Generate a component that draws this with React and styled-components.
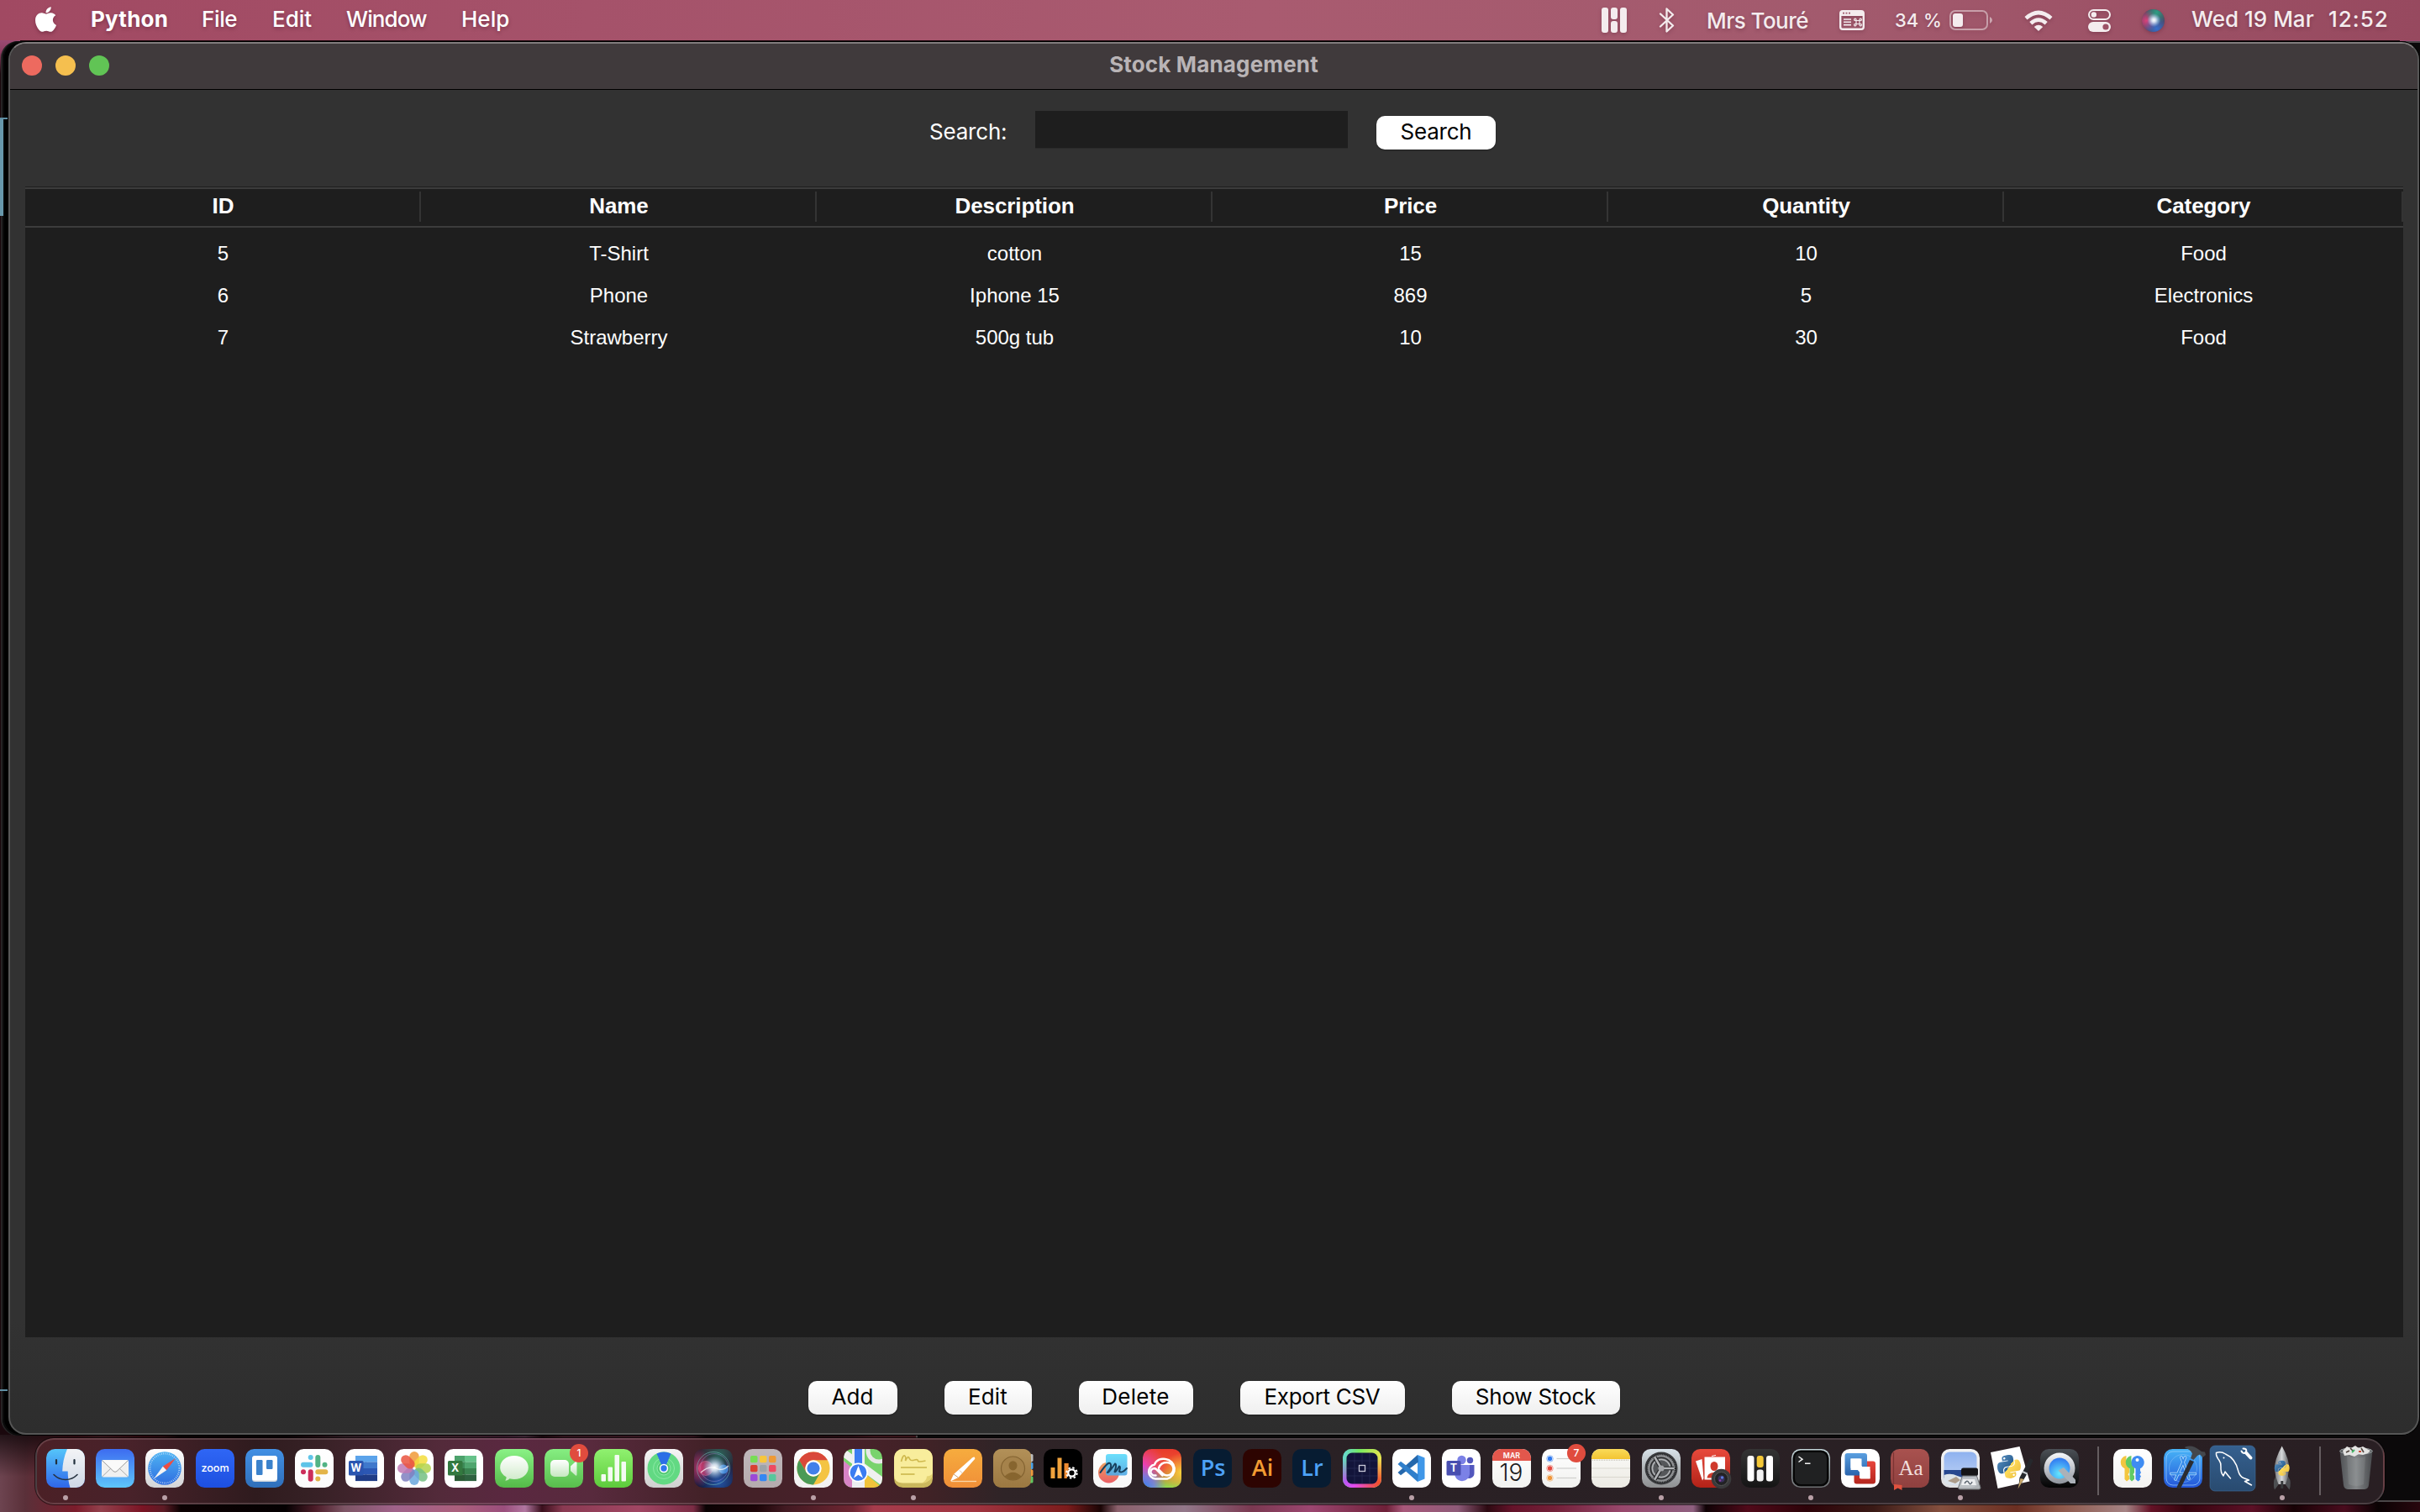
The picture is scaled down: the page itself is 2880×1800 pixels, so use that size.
import React from "react";
import styled, { createGlobalStyle } from "styled-components";
import { FaApple, FaPython } from "react-icons/fa";

const UI = `Inter, "Liberation Sans", sans-serif`;
const ARIAL = `"Liberation Sans", Arial, sans-serif`;

const GlobalStyle = createGlobalStyle`
  * { box-sizing: border-box; }
  body { margin: 0; background: #000; overflow: hidden; }
`;

/* ---------- desktop ---------- */

const Desktop = styled.div`
  position: relative;
  width: 2880px;
  height: 1800px;
  overflow: hidden;
  display: flex;
  flex-direction: column;
  font-family: ${UI};
  background: #1a080d;
`;

const Wallpaper = styled.div`
  position: absolute;
  left: 0;
  right: 0;
  bottom: 0;
  height: 92px;
  background:
    linear-gradient(180deg, rgba(10, 4, 6, 0.75) 0, rgba(10, 4, 6, 0) 50px),
    linear-gradient(90deg,
      #6d4450 0, #5a3039 30px, #7b1c2b 90px, #93404c 120px, #7a1424 170px, #5c1b25 195px, #0c0203 215px,
      #050102 340px, #4c1c28 375px, #7d5565 410px, #a0628a 470px, #ab5f7c 545px, #9a4e7c 600px, #b176a0 625px,
      #3a0f1c 645px, #8a3a52 670px, #a14663 760px, #7b2c45 825px, #0b0304 840px, #1c0508 900px, #421a22 935px,
      #6e2632 1015px, #a63c4c 1040px, #a03440 1160px, #7c1c1c 1270px, #1a0505 1310px, #8b606c 1330px,
      #93788a 1410px, #7a3850 1490px, #9c4670 1560px, #6e2038 1650px, #a8587a 1670px, #8e5a78 1735px,
      #2d0a12 1770px, #65132a 1800px, #722038 1850px, #98486c 1930px, #8f6080 2015px, #0f0205 2030px,
      #510a1a 2080px, #2d0309 2150px, #3a1a16 2230px, #85503f 2310px, #6b2f22 2400px, #8d5648 2450px,
      #a58384 2530px, #641226 2560px, #36050f 2600px, #5c1026 2680px, #170205 2730px, #4a0c1e 2790px,
      #0a0203 2830px, #28060e 2880px);
`;

const CornerTint = styled.div`
  position: absolute;
  top: 48px;
  ${(p) => (p.$right ? "right: 0;" : "left: 0;")}
  width: 24px;
  height: 40px;
  background: linear-gradient(180deg, #9a4a72 0, #8c3d60 14px, #1a080d 40px);
`;

const BackWindow = styled.div`
  position: absolute;
  left: ${(p) => p.$left}px;
  right: ${(p) => p.$right}px;
  top: 49px;
  bottom: ${(p) => p.$bottom}px;
  background: ${(p) => p.$bg || "#000"};
  border: 2px solid ${(p) => p.$line};
  border-radius: 20px;
`;

const TealEdge = styled.div`
  position: absolute;
  left: 0;
  top: 140px;
  width: 9px;
  height: 1516px;
  border-top: 2px solid #5f8ea3;
  border-bottom: 2px solid #5f8ea3;
  &::before {
    content: "";
    display: block;
    width: 4px;
    height: 115px;
    background: #6797ab;
  }
`;

/* ---------- menu bar ---------- */

const MenuBar = styled.header`
  position: relative;
  height: 48px;
  flex: none;
  display: flex;
  align-items: center;
  padding-left: 41px;
  color: #fff;
  background: linear-gradient(90deg, #a14962 0, #a5526a 700px, #a95b70 1500px, #a25a6d 2200px, #97495f 2880px);
`;

const AppleMark = styled(FaApple)`
  width: 27px;
  height: 34px;
  margin: 0 40px 3px 0;
  flex: none;
  filter: drop-shadow(0 2px 2px rgba(60, 10, 30, 0.35));
`;

const MenuItem = styled.span`
  width: ${(p) => p.$w}px;
  flex: none;
  font-size: 26px;
  font-weight: ${(p) => (p.$bold ? 700 : 500)};
  letter-spacing: ${(p) => p.$track || 0}px;
  line-height: 46px;
  height: 48px;
  white-space: nowrap;
  text-shadow: 0 2px 4px rgba(60, 10, 30, 0.35);
`;

const StatusArea = styled.div`
  width: 974px;
  height: 48px;
  margin-left: auto;
  display: flex;
  align-items: center;
  color: #f4ecee;
`;

const Status = styled.div`
  width: ${(p) => p.$w}px;
  margin-left: ${(p) => p.$gap || 0}px;
  flex: none;
  display: flex;
  svg { display: block; overflow: visible; filter: drop-shadow(0 2px 2px rgba(60, 10, 30, 0.25)); }
`;

const StatusText = styled(Status)`
  height: 48px;
  line-height: ${(p) => p.$lh || 46}px;
  font-size: ${(p) => p.$size || 26}px;
  font-weight: 500;
  letter-spacing: ${(p) => p.$track || 0}px;
  white-space: nowrap;
  text-shadow: 0 2px 4px rgba(60, 10, 30, 0.3);
`;

/* ---------- window ---------- */

const AppWindow = styled.main`
  position: relative;
  width: 2869px;
  height: 1658px;
  margin: 2px 0 0 10px;
  flex: none;
  display: flex;
  flex-direction: column;
  border: 2px solid #565656;
  border-top-color: #817c7d;
  border-radius: 21px;
  overflow: hidden;
  background: linear-gradient(180deg, #323232 0, #323232 1520px, #2d2d2d 100%);
  box-shadow: 0 0 0 1px #000;
`;

const TitleBar = styled.div`
  height: 55px;
  flex: none;
  display: flex;
  align-items: center;
  padding: 0 0 2px 14px;
  background: #403a3c;
  border-bottom: 1px solid #000;
`;

const Lights = styled.div`
  width: 400px;
  display: flex;
  gap: 16px;
`;

const Light = styled.span`
  width: 24px;
  height: 24px;
  border-radius: 50%;
  background: ${(p) => p.$color};
`;

const Title = styled.h1`
  flex: 1;
  margin: 0 414px 0 0;
  text-align: center;
  font-size: 26px;
  font-weight: 700;
  letter-spacing: 0.15px;
  line-height: 49px;
  height: 52px;
  color: #b9b4b6;
`;

const SearchRow = styled.form`
  height: 115px;
  flex: none;
  display: flex;
  align-items: flex-start;
  padding: 25px 0 0 1094px;
`;

const SearchLabel = styled.label`
  width: 126px;
  font-size: 26px;
  letter-spacing: -0.2px;
  line-height: 49px;
  color: #fff;
`;

const SearchInput = styled.input`
  width: 372px;
  height: 44px;
  margin: 0 34px 0 0;
  padding: 0 8px;
  border: 0;
  border-radius: 0;
  outline: 0;
  background: #1e1e1e;
  color: #fff;
  font: 26px ${UI};
  box-shadow: 0 1px 0 #2a2a2a;
`;

const PushButton = styled.button`
  width: ${(p) => p.$w}px;
  height: 40px;
  flex: none;
  margin: ${(p) => p.$drop || 0}px 0 0;
  padding: 0 0 3px;
  border: 0;
  border-radius: 10px;
  background: ${(p) => (p.$flat ? "#fff" : "linear-gradient(180deg, #fff, #efefef)")};
  box-shadow: 0 1px 2px rgba(0, 0, 0, 0.35);
  color: #000;
  font: 400 26px/37px ${UI};
  letter-spacing: ${(p) => p.$track || 0}px;
  text-align: center;
  white-space: nowrap;
`;

const Table = styled.section`
  width: 2830px;
  height: 1370px;
  flex: none;
  margin-left: 18px;
  display: flex;
  flex-direction: column;
  background: #1e1e1e;
  border-top: 1px solid #1e1e1e;
`;

const COLS = "471px 471px 471px 471px 471px 475px";

const HeaderRow = styled.div`
  height: 48px;
  flex: none;
  display: grid;
  grid-template-columns: ${COLS};
  border-top: 2px solid #3c3c3c;
  border-bottom: 2px solid #3c3c3c;
`;

const HeaderCell = styled.div`
  height: 36px;
  margin-top: 3px;
  border-right: 2px solid #343434;
  padding-left: 2px;
  text-align: center;
  font: 700 26px/34px ${ARIAL};
  letter-spacing: -0.1px;
  color: #fff;
`;

const Rows = styled.div`
  padding-top: 6px;
`;

const Row = styled.div`
  height: 50px;
  display: grid;
  grid-template-columns: ${COLS};
`;

const Cell = styled.div`
  text-align: center;
  font: 24px/50px ${ARIAL};
  color: #fff;
`;

const Actions = styled.footer`
  margin-top: 52px;
  display: flex;
  justify-content: center;
  gap: 56px;
`;

/* ---------- dock ---------- */

const DockShelf = styled.nav`
  position: relative;
  width: 2796px;
  height: 79px;
  flex: none;
  margin: 4px 0 0 42px;
  padding-left: 4px;
  display: flex;
  align-items: stretch;
  border-radius: 22px;
  border: 2px solid rgba(255, 230, 235, 0.16);
  box-shadow: 0 0 0 1px rgba(0, 0, 0, 0.55);
  background: linear-gradient(90deg, #4b2026 0, #48222a 110px, #2f1b1e 260px, #352024 320px, #532a3a 480px, #5a2840 560px,
    #582a3d 660px, #422127 800px, #48212a 960px, #402226 1060px, #2f2427 1150px, #2a2125 1500px, #291f23 100%);
  background-color: #2a1c20;
`;

const Slot = styled.div`
  width: 59.35px;
  flex: none;
  display: flex;
  flex-direction: column;
  align-items: center;
  padding-top: 11px;
  svg.tile { width: 46px; height: 46px; display: block; overflow: visible; flex: none; }
  text { font-family: ${UI}; }
`;

const RunningDot = styled.i`
  width: 6px;
  height: 6px;
  margin-top: 9px;
  border-radius: 50%;
  background: #b9a0a7;
`;

const Divider = styled.i`
  width: 2px;
  height: 58px;
  margin: 8px ${(p) => p.$after}px 0 ${(p) => p.$before}px;
  flex: none;
  background: #655d60;
`;

/* ---------- icon helpers ---------- */

const Grad = ({ id, a, b, c, h }) => (
  <linearGradient id={id} x1="0" y1="0" x2={h ? 1 : 0} y2={h ? 0 : 1}>
    <stop offset="0" stopColor={a} />
    {c && <stop offset=".5" stopColor={c} />}
    <stop offset="1" stopColor={b} />
  </linearGradient>
);

const Tile = ({ id, a, b, c, children }) => (
  <svg className="tile" viewBox="0 0 46 46">
    <defs>
      <Grad id={id + "Bg"} a={a} b={b || a} c={c} />
      <clipPath id={id + "Clip"}><rect width="46" height="46" rx="10.5" /></clipPath>
    </defs>
    <rect width="46" height="46" rx="10.5" fill={`url(#${id}Bg)`} />
    {children}
  </svg>
);

const Badge = ({ n }) => (
  <g>
    <circle cx="41" cy="5" r="11" fill="#e04c3e" />
    <text x="41" y="9.2" fontSize="12" fontWeight="500" fill="#fff" textAnchor="middle">{n}</text>
  </g>
);

const PythonGlyph = ({ id, x, y, size }) => (
  <g>
    <defs>
      <linearGradient id={id} x1="0" y1="0" x2="1" y2="1">
        <stop offset="0" stopColor="#5b93c4" />
        <stop offset=".5" stopColor="#2f6496" />
        <stop offset=".5" stopColor="#ffdc5a" />
        <stop offset="1" stopColor="#e8b93a" />
      </linearGradient>
    </defs>
    <FaPython x={x} y={y} size={size} fill={`url(#${id})`} />
  </g>
);

/* ---------- dock icons ---------- */

const Finder = () => (
  <Tile id="finder" a="#55c5fa" b="#2f66ea">
    <defs><Grad id="finderFace" a="#f3f4f6" b="#cfd8e6" /></defs>
    <g clipPath="url(#finderClip)">
      <path d="M25 0C21 9 19.500 18 19.200 26.500h6.500C25.700 33 26.500 40 28.500 46H46V0z" fill="url(#finderFace)" />
    </g>
    <path d="M12 13v4.500M33.500 13v4.500" stroke="#22303d" strokeWidth="2.200" strokeLinecap="round" />
    <path d="M9 30.500C17 38.500 29 38.500 37 30.500" fill="none" stroke="#26323f" strokeWidth="1.600" strokeLinecap="round" />
  </Tile>
);

const Mail = () => (
  <Tile id="mail" a="#3d6cf0" b="#5ec6fb">
    <rect x="7" y="13" width="32" height="20.500" rx="2" fill="#f0f0f0" />
    <path d="M7.500 33 19 22M38.500 33 27 22" stroke="#aaa" strokeWidth="1" />
    <path d="M7.500 13.500 21 26.500q2 1.800 4 0L38.500 13.500" fill="#fafafa" stroke="#9b9b9b" strokeWidth="1" />
  </Tile>
);

const Safari = () => (
  <Tile id="safari" a="#ffffff" b="#d4d4d6">
    <defs><Grad id="safariDial" a="#4eb4f3" b="#2f6de0" /></defs>
    <circle cx="23" cy="23" r="19.800" fill="url(#safariDial)" />
    <circle cx="23" cy="23" r="17.500" fill="none" stroke="#cfe4fa" strokeWidth="2" strokeDasharray=".7 1.590" />
    <path d="M36 11 20.800 20.800l4.400 4.400z" fill="#ee4d42" />
    <path d="M10 35.500 20.800 20.800l4.400 4.400z" fill="#f5f5f5" />
  </Tile>
);

const Zoom = () => (
  <Tile id="zoom" a="#2f66f5" b="#1d4fe0">
    <text x="23" y="26.500" fontSize="12.600" fontWeight="500" fill="#fff" textAnchor="middle">zoom</text>
  </Tile>
);

const Trello = () => (
  <Tile id="trello" a="#4290e4" b="#2f6fba">
    <rect x="8" y="8" width="30" height="31" rx="3.500" fill="#cfd6de" />
    <rect x="8" y="8" width="30" height="29.500" rx="3.500" fill="#fff" />
    <rect x="13" y="13" width="7.500" height="18" rx="1.200" fill="#3b82cc" />
    <rect x="25" y="13" width="7.500" height="11" rx="1.200" fill="#3b82cc" />
  </Tile>
);

const Slack = () => (
  <Tile id="slack" a="#ffffff" b="#fbfbfb">
    <g strokeWidth="6" strokeLinecap="round" fill="none">
      <path d="M27.300 10v9" stroke="#52b385" />
      <path d="M35.500 18.800h.01" stroke="#52b385" />
      <path d="M10 18.800h8.500" stroke="#5fc4e8" />
      <path d="M18.700 10v.01" stroke="#5fc4e8" />
      <path d="M18.700 27.300v8.500" stroke="#cc2d5a" />
      <path d="M10 27.300h.01" stroke="#cc2d5a" />
      <path d="M27.300 27.300h9" stroke="#e3b448" />
      <path d="M27.300 35.500v.01" stroke="#e3b448" />
    </g>
  </Tile>
);

const OfficeDoc = ({ id, letter, colors, tag }) => (
  <Tile id={id} a="#ffffff">
    {colors.map((row, i) => (
      <g key={i}>
        <rect x="12" y={8 + i * 7.5} width="13" height="7.600" fill={row[0]} />
        <rect x="24" y={8 + i * 7.5} width="14" height="7.600" fill={row[1]} />
      </g>
    ))}
    <rect x="4" y="14" width="17.500" height="17.500" rx="1.500" fill={tag} />
    <text x="12.700" y="27.300" fontSize="12.500" fontWeight="700" fill="#fff" textAnchor="middle">{letter}</text>
  </Tile>
);

const Word = () => (
  <OfficeDoc id="word" letter="W" tag="#2a55b0"
    colors={[["#5ba3ea", "#5ba3ea"], ["#3f78cc", "#3f78cc"], ["#2b57b4", "#2b57b4"], ["#1f3c86", "#1f3c86"]]} />
);

const Excel = () => (
  <OfficeDoc id="excel" letter="X" tag="#33793f"
    colors={[["#4ca26c", "#66c28a"], ["#3d8a57", "#4fa56e"], ["#2f6b3d", "#3a8350"], ["#2b5a35", "#2e6240"]]} />
);

const Photos = () => (
  <Tile id="photos" a="#ffffff">
    {["#f09a37", "#f3dd3c", "#b3d34e", "#74bf83", "#6aa8de", "#7f7fc0", "#c079b4", "#ea5440"].map((c, i) => (
      <rect key={c} x="17.300" y="3" width="11.400" height="18.500" rx="5.700" fill={c} fillOpacity=".85"
        transform={`rotate(${i * 45} 23 23)`} />
    ))}
    <circle cx="23" cy="23" r="1.200" fill="#fff" />
  </Tile>
);

const Messages = () => (
  <Tile id="msg" a="#8af286" b="#54ba48">
    <defs><Grad id="msgB" a="#fff" b="#cfeac9" /></defs>
    <path d="M23 8c9.500 0 16.800 6 16.800 14S32.500 36 23 36c-2 0-3.800-.3-5.500-.8-1.300 1.400-3 2.200-5.300 2.400 1-1.300 1.500-2.700 1.300-4.300C9 30.800 6.200 26.700 6.200 22 6.200 14 13.500 8 23 8z" fill="url(#msgB)" />
  </Tile>
);

const FaceTime = () => (
  <Tile id="ft" a="#86ee82" b="#58bd4c">
    <defs><Grad id="ftB" a="#fff" b="#c6e8c1" /></defs>
    <rect x="7" y="13" width="22" height="20" rx="5" fill="url(#ftB)" />
    <path d="M31 20.500 37 15q1.500-.8 1.500.8v14.800q0 1.600-1.500.8l-6-5.400z" fill="url(#ftB)" />
    <Badge n="1" />
  </Tile>
);

const Numbers = () => (
  <Tile id="num" a="#90f170" b="#5dcb3b">
    {[[8.5, 30], [16.5, 21.5], [24.5, 7], [32.5, 15]].map(([x, y]) => (
      <rect key={x} x={x} y={y} width="5.500" height={38.5 - y} rx="1" fill="#f4fbf2" />
    ))}
  </Tile>
);

const FindMy = () => (
  <Tile id="fm" a="#f5f5f5" b="#cfcfcf">
    <circle cx="23" cy="23" r="19.500" fill="#62d983" />
    <circle cx="23" cy="23" r="12.500" fill="none" stroke="#8ceaa6" strokeWidth="1" />
    <circle cx="23" cy="23" r="8" fill="#57cb78" stroke="#8ceaa6" strokeWidth="1" />
    <path d="M14.500 5.500Q23 1.500 31.500 5.500L24.500 22h-3z" fill="#2b6fe6" />
    <circle cx="23" cy="23" r="5.200" fill="#fff" />
    <circle cx="23" cy="23" r="3.700" fill="#2e78ee" />
  </Tile>
);

const SiriOrb = ({ id }) => (
  <defs>
    <radialGradient id={id + "R"} cx=".2" cy=".5" r=".5"><stop offset="0" stopColor="#f2407e" /><stop offset="1" stopColor="#f2407e" stopOpacity="0" /></radialGradient>
    <radialGradient id={id + "B"} cx=".65" cy=".85" r=".55"><stop offset="0" stopColor="#2f7cf0" /><stop offset="1" stopColor="#2f7cf0" stopOpacity="0" /></radialGradient>
    <radialGradient id={id + "G"} cx=".65" cy=".15" r=".5"><stop offset="0" stopColor="#23b58b" /><stop offset="1" stopColor="#23b58b" stopOpacity="0" /></radialGradient>
    <radialGradient id={id + "W"} cx=".53" cy=".48" r=".3"><stop offset="0" stopColor="#fff" /><stop offset=".3" stopColor="#e8f4ff" stopOpacity=".85" /><stop offset="1" stopColor="#9fd8ff" stopOpacity="0" /></radialGradient>
  </defs>
);

const Siri = () => (
  <Tile id="siri" a="#352232" b="#10183a">
    <SiriOrb id="so" />
    <g clipPath="url(#siriClip)">
      <rect width="30" height="46" fill="url(#soR)" opacity=".7" />
      <rect width="46" height="46" fill="url(#soG)" opacity=".45" />
      <rect width="46" height="46" fill="url(#soB)" opacity=".6" />
    </g>
    <circle cx="23" cy="23" r="19.500" fill="none" stroke="#6fb8b8" strokeOpacity=".6" strokeWidth="1" />
    <circle cx="24" cy="22" r="16.500" fill="none" stroke="#a78fd8" strokeOpacity=".5" strokeWidth=".8" />
    <circle cx="14" cy="23" r="8.500" fill="#f0487f" fillOpacity=".45" stroke="#ff8fb0" strokeOpacity=".6" strokeWidth=".6" />
    <circle cx="35" cy="24" r="5.500" fill="#4fa4ff" fillOpacity=".7" />
    <rect width="46" height="46" fill="url(#soW)" />
    <path d="M8 28Q18 19 26 23T41 20" fill="none" stroke="#fff" strokeOpacity=".7" strokeWidth="1.200" />
  </Tile>
);

const Launchpad = () => (
  <Tile id="lp" a="#c0b8bb" b="#b5abae">
    {["#77dd55", "#f7c63d", "#ee9a36", "#d93f33", "#9da3a8", "#ee4a62", "#9b4ad8", "#3487f2", "#57c79c"].map((c, i) => (
      <rect key={c} x={8 + (i % 3) * 11} y={8 + Math.floor(i / 3) * 11} width="8.500" height="8.300" rx="1.800" fill={c} />
    ))}
  </Tile>
);

const Chrome = () => (
  <Tile id="chrome" a="#ffffff" b="#f0f0f0">
    <circle cx="23" cy="23" r="19.500" fill="#f4c443" />
    <path d="M6.100 13.300A19.500 19.500 0 0 1 39.900 13.300H23A9.700 9.700 0 0 0 14.600 27.800z" fill="#d9483a" />
    <path d="M6.100 13.300A19.500 19.500 0 0 0 23 42.500L31.400 27.800A9.700 9.700 0 0 1 14.600 27.800z" fill="#4a9a56" />
    <circle cx="23" cy="23" r="9.700" fill="#fff" />
    <circle cx="23" cy="23" r="7.600" fill="#4280ea" />
  </Tile>
);

const Maps = () => (
  <Tile id="maps" a="#79d36d">
    <g clipPath="url(#mapsClip)">
      <path d="M0 14 14 26v20H0z" fill="#d884c6" />
      <path d="M24 46V28l22 18z" fill="#f1c43b" />
      <path d="M-2 3 48 40" stroke="#f0f0f0" strokeWidth="9" />
      <circle cx="42" cy="2" r="13" fill="none" stroke="#e8e8e8" strokeWidth="5" />
      <path d="M17.500-2v50" stroke="#eceff1" strokeWidth="15" />
      <path d="M17.500-2v24" stroke="#3b7df2" strokeWidth="9" />
    </g>
    <circle cx="17.500" cy="28" r="11.500" fill="#fff" />
    <circle cx="17.500" cy="28" r="9.800" fill="#3b7df2" />
    <path d="m17.500 20 5.500 14.500-5.500-3.700-5.500 3.700z" fill="#fff" />
  </Tile>
);

const Stickies = () => (
  <Tile id="st" a="#d8c76c" b="#c9b75b">
    <path d="M0 10.500A10.500 10.500 0 0 1 10.500 0h25A10.500 10.500 0 0 1 46 10.500V29Q44 40 33 40.500H10Q0 40 0 31z" fill="#f8ed9c" />
    <path d="M46 29Q44 40 33 40.500q6-3 6-8 4 0 7-3.500z" fill="#e3d373" />
    <path d="M8.500 15q2-8 4-7t1 6q3-6 4-4t2 3 5 0 4 1 9 0" fill="none" stroke="#cfb94e" strokeWidth="1.700" />
    <path d="M8 22h31M8 30h16.500" stroke="#d4c25c" strokeWidth="2.200" />
  </Tile>
);

const Pages = () => (
  <Tile id="pg" a="#f6ac3e" b="#f08f38">
    <path d="M9 38.500h30" stroke="#fbd6a8" strokeWidth="1.300" />
    <path d="M8 38.500 12 30 34 10.500q3.500-2.500 3.300 1.200L17.500 34z" fill="#fff" />
    <path d="m12 30 5.500 4" stroke="#c99a68" strokeWidth="1" />
    <path d="M19 25.500 22.500 29" stroke="#d9c2a4" strokeWidth="1" />
  </Tile>
);

const Contacts = () => (
  <Tile id="ct" a="#b29058" b="#9b7841">
    <rect x="44" y="6" width="3.500" height="9" rx="1.500" fill="#bcbcbc" />
    <rect x="44" y="16" width="3.500" height="8" rx="1.500" fill="#4aa3e8" />
    <rect x="44" y="24.500" width="3.500" height="7.500" rx="1.500" fill="#f09a3c" />
    <rect x="44" y="32.500" width="3.500" height="8" rx="1.500" fill="#62c660" />
    <rect width="45" height="46" rx="9.500" fill="url(#ctBg)" />
    <circle cx="23.500" cy="23" r="14" fill="#a5824b" stroke="#836331" strokeWidth="1.200" />
    <ellipse cx="23.500" cy="19.800" rx="5" ry="5.600" fill="#87652f" />
    <path d="M13.500 32.500Q23.500 23 33.500 32.500 23.500 41 13.500 32.500z" fill="#87652f" />
  </Tile>
);

const Analytics = () => (
  <Tile id="an" a="#000000">
    <path d="M8.500 22h5v13h-5zM16.500 10.500h5v24.500h-5z" fill="#f0a23c" />
    <path d="M24.500 17h5.200v10l-2 8h-3.200z" fill="#ee8a30" />
    <circle cx="33.500" cy="28.500" r="6.200" fill="none" stroke="#fff" strokeWidth="2" strokeDasharray="2.430 2.440" />
    <circle cx="33.500" cy="28.500" r="4.200" fill="#000" stroke="#fff" strokeWidth="2.300" />
  </Tile>
);

const Freeform = () => (
  <Tile id="ff" a="#ffffff" b="#f7f7f7">
    <defs><Grad id="ffA" a="#f0a15f" b="#ea5f66" /><Grad id="ffB" a="#5fdcfb" b="#52a8e4" /></defs>
    <circle cx="18.500" cy="28" r="12.500" fill="url(#ffA)" />
    <rect x="15" y="6" width="25.500" height="25.500" rx="3" fill="url(#ffB)" fillOpacity=".92" />
    <path d="M8.500 28Q18 14 20.500 17.500T17 28q1 1 9-10.500 2.500.5-.5 9.500 1 1.500 5.500-6.500 2 0 0 6 3 3 9-3.500" fill="none" stroke="#17415f" strokeWidth="2" strokeLinecap="round" />
  </Tile>
);

const CreativeCloud = () => (
  <Tile id="cc" a="#e8392c" b="#8fdc4e" c="#ef5a32">
    <defs>
      <radialGradient id="ccL" cx="0" cy=".45" r=".6"><stop offset="0" stopColor="#e93ec8" /><stop offset="1" stopColor="#e93e9c" stopOpacity="0" /></radialGradient>
      <radialGradient id="ccB" cx="0" cy="1" r=".6"><stop offset="0" stopColor="#2f7df6" /><stop offset=".5" stopColor="#6a7bf0" stopOpacity=".8" /><stop offset="1" stopColor="#6a7bf0" stopOpacity="0" /></radialGradient>
      <radialGradient id="ccY" cx="1" cy=".6" r=".5"><stop offset="0" stopColor="#f6d43a" /><stop offset="1" stopColor="#f6b43a" stopOpacity="0" /></radialGradient>
    </defs>
    <rect width="46" height="46" rx="10.500" fill="url(#ccY)" />
    <rect width="46" height="46" rx="10.500" fill="url(#ccL)" />
    <rect width="46" height="46" rx="10.500" fill="url(#ccB)" />
    <g fill="none" stroke="#fff" strokeWidth="2.500" strokeLinecap="round">
      <path d="M15 35.500A8.600 8.600 0 0 1 14 18.500 C16 13 22 10.800 27 12 A12 12 0 0 1 29 35.500z" />
      <path d="M23.500 31.500 16 24a4 4 0 0 0-5 6.300Q12.500 32 15.500 31.500" />
      <path d="M19 22.500q2.500-6.500 9.500-6.500A7.700 7.700 0 0 1 29 31.500q-3.200 0-5.200-2L19 24.500" />
    </g>
  </Tile>
);

const AdobeText = styled.text`
  && { font-family: "Open Sans", "Noto Sans", sans-serif; }
`;

const SerifText = styled.text`
  && { font-family: "Liberation Serif", serif; }
`;

const Adobe = ({ id, bg, fg, children }) => (
  <Tile id={id} a={bg}>
    <AdobeText x="23.500" y="32.300" fontSize="27" fontWeight="600" fill={fg} textAnchor="middle">{children}</AdobeText>
  </Tile>
);

const PixelPad = () => (
  <Tile id="pp" a="#6be06a" b="#b24df0">
    <defs>
      <linearGradient id="ppG" x1="0" y1="0" x2="1" y2=".3"><stop offset="0" stopColor="#62d3e6" /><stop offset=".4" stopColor="#75ea62" /><stop offset="1" stopColor="#f2e24b" /></linearGradient>
      <linearGradient id="ppH" x1="0" y1=".3" x2="1" y2=".5"><stop offset="0" stopColor="#a05cf5" /><stop offset=".4" stopColor="#e14cf0" /><stop offset="1" stopColor="#f0502f" /></linearGradient>
      <linearGradient id="ppM" x1="0" y1="0" x2="0" y2="1"><stop offset=".25" stopColor="#000" /><stop offset=".85" stopColor="#fff" /></linearGradient>
      <mask id="ppK"><rect width="46" height="46" fill="url(#ppM)" /></mask>
    </defs>
    <rect width="46" height="46" rx="10.500" fill="url(#ppG)" />
    <rect width="46" height="46" rx="10.500" fill="url(#ppH)" mask="url(#ppK)" />
    <rect x="4.500" y="4.500" width="37" height="37" rx="6.500" fill="#12143a" />
    <path d="M14 5v36M32 5v36M5 14h36M5 32h36M23 5v36M5 23h36" stroke="#2a2c58" strokeWidth=".7" />
    <rect x="19.500" y="19.500" width="7" height="7" fill="#12143a" stroke="#c8c8d8" strokeWidth="1.300" />
  </Tile>
);

const VSCode = () => (
  <Tile id="vs" a="#ffffff">
    <path d="M30 7 38.500 10.500v25L30 39z" fill="#3f97e8" />
    <path d="M30 7 6.500 28l3.500 3.200L31 15.500z" fill="#2568ac" />
    <path d="M30 39 6.500 18l3.500-3.200L31 30.500z" fill="#2f7fcb" />
  </Tile>
);

const Teams = () => (
  <Tile id="tm" a="#ffffff">
    <circle cx="33.500" cy="13.500" r="3.700" fill="#5257bd" />
    <path d="M27 19h11.500v9.500a6 6 0 0 1-9 5.500z" fill="#5257bd" />
    <circle cx="23.500" cy="13" r="5.200" fill="#7b81e6" />
    <path d="M15 19h18v11a9 9 0 0 1-17.500 2z" fill="#7b81e6" />
    <rect x="5.500" y="14" width="17" height="17.500" rx="1.500" fill="#484eb0" />
    <text x="14" y="27.300" fontSize="12.500" fontWeight="700" fill="#fff" textAnchor="middle">T</text>
  </Tile>
);

const Calendar = () => (
  <Tile id="cal" a="#ffffff" b="#f2f2f0">
    <g clipPath="url(#calClip)"><rect width="46" height="14" fill="#e3574c" /></g>
    <text x="23" y="11" fontSize="8.800" fontWeight="600" fill="#fff" textAnchor="middle">MAR</text>
    <text x="22.500" y="38" fontSize="28" fontWeight="300" fill="#1c1c1c" textAnchor="middle">19</text>
  </Tile>
);

const Reminders = () => (
  <Tile id="rem" a="#ffffff" b="#f1f1ef">
    {[["#2f7af0", 11.5], ["#e6483d", 23], ["#f0963a", 34.5]].map(([c, y]) => (
      <g key={c}>
        <circle cx="9.500" cy={y} r="3.800" fill="none" stroke={c} strokeOpacity=".5" strokeWidth="1" />
        <circle cx="9.500" cy={y} r="2.700" fill={c} />
        <path d={`M17.500 ${y}h23.500`} stroke="#cfcfcd" strokeWidth="1.200" />
      </g>
    ))}
    <Badge n="7" />
  </Tile>
);

const Notes = () => (
  <Tile id="nt" a="#fbfbf9" b="#eceae3">
    <defs><Grad id="ntY" a="#fadb59" b="#f3c432" /></defs>
    <g clipPath="url(#ntClip)"><rect width="46" height="12" fill="url(#ntY)" /></g>
    <path d="M1 13.200h44" stroke="#b9b5a6" strokeWidth="1" strokeDasharray="1 1" />
    <path d="M0 23h46M0 33.500h46" stroke="#d9d7d0" strokeWidth="1" />
  </Tile>
);

const Settings = () => (
  <Tile id="set" a="#d9e3ea" b="#8f9092" c="#b1b6b9">
    <circle cx="23" cy="23" r="19.500" fill="#3b3c3f" />
    <circle cx="23" cy="23" r="16.800" fill="#8f9194" stroke="#1f2022" strokeWidth="2.200" strokeDasharray="1 1" />
    <circle cx="23" cy="23" r="12.700" fill="#727477" stroke="#2b2c2e" strokeWidth="1.600" />
    <circle cx="23" cy="23" r="10.500" fill="#55575a" stroke="#b1b3b6" strokeWidth="1.500" />
    <path d="M23 23H38M23 23 15.500 10M23 23 15.500 36" stroke="#232426" strokeWidth="4.600" />
    <path d="M23 23H38.500M23 23 15.200 9.700M23 23 15.200 36.300" stroke="#b1b3b6" strokeWidth="2.600" />
    <circle cx="23" cy="23" r="3.600" fill="#a3a5a8" />
  </Tile>
);

const PhotoBooth = () => (
  <Tile id="pb" a="#e84a3c" b="#b32218">
    <path d="M5 14.500 12.500 12l2 23-1.500 2.500z" fill="#fff" />
    <path d="M15.500 9.500H40v27H15.500z" fill="#fff" />
    <ellipse cx="27" cy="20.500" rx="4.500" ry="5.500" fill="#cf3a2c" />
    <path d="M18.500 34.500q1-6.500 8.500-6.500t8.500 6.500z" fill="#cf3a2c" />
    <path d="M24 8.500l5-1" stroke="#fff" strokeWidth="1" />
    <circle cx="35.500" cy="35.500" r="11.800" fill="#3a3a3c" />
    <circle cx="35.500" cy="35.500" r="8" fill="#222224" stroke="#555" strokeWidth="1" />
    <circle cx="35.500" cy="35.500" r="4" fill="#39305e" />
    <circle cx="36.500" cy="34" r="1.700" fill="#5a7ad8" />
    <circle cx="34" cy="37.500" r="1.300" fill="#8d3ea2" />
  </Tile>
);

const Columns = () => (
  <Tile id="col" a="#343434" b="#151515">
    <rect x="7.500" y="8" width="8" height="30.500" rx="3" fill="#fff" />
    <rect x="30" y="8" width="8" height="30.500" rx="3" fill="#fff" />
    <rect x="18.700" y="8" width="8" height="14" rx="3" fill="#f4c837" />
    <rect x="18.700" y="24.500" width="8" height="14" rx="3" fill="#f2f2f2" />
  </Tile>
);

const Terminal = () => (
  <Tile id="term" a="#c4d6da" b="#6d6f72">
    <rect x="1.500" y="1.500" width="43" height="43" rx="9.500" fill="#060606" />
    <rect x="4" y="4" width="38" height="38" rx="7" fill="#202122" />
    <path d="m8.500 9 4.500 3.200L8.500 15.500M16 17.300h6.500" fill="none" stroke="#f2f2f2" strokeWidth="1.500" />
  </Tile>
);

const VMware = () => (
  <Tile id="vm" a="#ffffff">
    <defs><Grad id="vmA" a="#5a9fe0" b="#2a64ad" /><Grad id="vmR" a="#e8453c" b="#b5261e" /></defs>
    <path d="M15.500 31v7.500q0 3 3 3H38q3 0 3-3v-21q0-3-3-3h-8v6.500h4.500V35H22v-4z" fill="url(#vmR)" />
    <path d="M7.500 5H28q3 0 3 3v13h-6.500V11.500H11.500V25H22v6.500H7.500q-3 0-3-3V8q0-3 3-3z" fill="url(#vmA)" />
    <path d="M11.500 11.500h11.500l-3.200 3.500L31.500 28l3-3.500V35.500H23l3.200-3.200L15 19.500l-3.500 3.500z" fill="#fff" />
  </Tile>
);

const Dictionary = () => (
  <Tile id="dic" a="#a9524f" b="#8f403f">
    <path d="M4 42v7l4.500-2.500L13.500 49v-6z" fill="#e0523f" />
    <path d="M3.500 4v38" stroke="#7c3333" strokeWidth="1.200" />
    <SerifText x="24" y="30.500" fontSize="25" fill="#f1dedb" textAnchor="middle">Aa</SerifText>
  </Tile>
);

const Preview = () => (
  <Tile id="pv" a="#f4f4f4" b="#dedfe0">
    <defs><Grad id="pvSky" a="#8fb2ef" b="#c3d5f5" /></defs>
    <rect x="3.500" y="3.500" width="39" height="39" rx="7" fill="url(#pvSky)" />
    <path d="M3.500 25h39v9.500h-39z" fill="#27488f" />
    <path d="M3.500 31q8-3 16 1t23 0v6a5 5 0 0 1-6 4.500H10q-6.500-.5-6.500-6z" fill="#dce4ea" />
    <path d="M8 38l10-5 5 4-6 4z" fill="#ad9d8b" />
    <rect x="24" y="22.500" width="20" height="9.500" rx="2.500" fill="#141416" />
    <path d="M25.500 32h17l4.500 14q0 2-2 2H22.500q-2 0-2-2z" fill="#b9bec2" fillOpacity=".92" stroke="#6e7275" strokeWidth="1" />
    <path d="M26 36h14l2 7H24z" fill="#eceef0" />
    <path d="M28 41q3-5 5-1t4-1" stroke="#5c6670" fill="none" strokeWidth="1.500" />
  </Tile>
);

const Idle = () => (
  <svg className="tile" viewBox="0 0 46 46">
    <path d="M0 4 34.500-3l12 41.500L8.500 47z" fill="#fff" />
    <g transform="rotate(-10 22 21)"><PythonGlyph id="idlePy" x={6} y={5} size={32} /></g>
    <path d="M46.500 11.500q3.500-.5 4 2.500L42 32l-9 15 1.500-13z" fill="#26282c" />
    <path d="m35.500 35 4 1-7 11.500z" fill="#c9a86b" />
    <path d="m38 27 5.500 2.500" stroke="#c8ccd0" strokeWidth="2" />
  </svg>
);

const QuickTime = () => (
  <Tile id="qt" a="#4b5056" b="#030303">
    <defs>
      <Grad id="qtR" a="#f6f8fb" b="#8d939b" />
      <radialGradient id="qtC" cx=".5" cy=".75" r=".8"><stop offset="0" stopColor="#66e8fc" /><stop offset="1" stopColor="#2b6ef0" /></radialGradient>
    </defs>
    <circle cx="23" cy="23" r="18.500" fill="url(#qtR)" />
    <circle cx="23" cy="23" r="12.500" fill="url(#qtC)" />
    <path d="M21.500 25.500 28 22l14 14.500V41h-6z" fill="#abb1b8" />
  </Tile>
);

const Passwords = () => (
  <Tile id="pw" a="#ffffff" b="#f4f3f1">
    {[["#f3c63f", 0], ["#62cb63", 6]].map(([c, dx]) => (
      <path key={c} transform={`translate(${dx} 0)`} d="M15.500 8C11 9 8.800 12 8.800 16c0 3.500 2 6 4.700 7.200V36l2.500 2.500 3-2.500v-4l-1.500-1.500L19 28v-6Q14.500 16 15.500 8z" fill={c} />
    ))}
    <path d="M28.500 8a8 8 0 0 1 3.500 15.300V26l1 2-1.500 2.500 1.500 2L31.500 35l.5 1.500-2.500 2-3-2.500V23.300A8 8 0 0 1 28.500 8z" fill="#3f8cf2" />
    <circle cx="28.500" cy="13" r="2" fill="#fff" />
  </Tile>
);

const Xcode = () => (
  <Tile id="xc" a="#47b4f7" b="#2355d8">
    <rect x="3" y="3" width="40" height="40" rx="8" fill="none" stroke="#9fd0fb" strokeOpacity=".7" strokeWidth="1" />
    <circle cx="23" cy="23" r="16.500" fill="none" stroke="#9fd0fb" strokeOpacity=".5" strokeWidth=".8" />
    <g fill="none" stroke="#b9defd" strokeWidth="3.600" strokeLinecap="round"><path d="M21 10 30 35M25.500 10 14 36M9 29.500h28.500" /></g>
    <g fill="none" stroke="#348ae8" strokeWidth="2" strokeLinecap="round"><path d="M21 10 30 35M25.500 10 14 36M9 29.500h28.500" /></g>
    <path d="M31 13 36 15 20.500 46q-2 2.500-5-.5z" fill="#2b2d31" />
    <path d="M25.500-2.500Q34-6 43 1.500l2 1.500 4 .5 1 3.500-3.500 3-3.500-3.500-3 1.500-4.500 5-3.500-2 2-5.500Q31.500 0 25.500-1z" fill="#44474c" />
  </Tile>
);

const MySQL = () => (
  <svg className="tile" viewBox="0 0 46 46">
    <defs><Grad id="sqlBg" a="#35608f" b="#294b70" /></defs>
    <rect x="-4" y="-4" width="54" height="54" rx="6" fill="url(#sqlBg)" stroke="#3f6f9f" strokeWidth=".6" />
    <path d="M3.500 4.500q6-2 11 1.500 12 5 15.500 21 1.500 5.500 6 7.500l6.500 2.500-5 1.500 8 4.500M3.500 4.500q-.5 4 3.500 9 2.500 3.500 2 7.500-.5 7 3 11l2-5q2.500 3.500 6.500 8" fill="none" stroke="#fff" strokeWidth="1.500" strokeLinejoin="round" strokeLinecap="round" />
    <circle cx="12.500" cy="10.500" r="1" fill="#fff" />
    <path d="M39 4.500 44.500 10.500" stroke="#fff" strokeWidth="4" strokeLinecap="round" />
    <path d="M33.500 2.500q2 4 6 1.500M35.500-.5q5 0 3.500 4" fill="none" stroke="#fff" strokeWidth="2" strokeLinecap="round" />
  </svg>
);

const Rocket = () => (
  <svg className="tile" viewBox="0 0 46 46">
    <defs><Grad id="rkB" h a="#77797c" c="#d6d8da" b="#5a5c5f" /></defs>
    <path d="M17 31q-5 4-4 14l1 3.500 4.500-6M28 31q6 4 4.500 14l-1 3.500-4.500-6" fill="#4d4f52" />
    <path d="M22.700-3.500Q32 13 31 24q-.5 9-4 18h-8.500Q14.500 33 14 24q-.5-11 8.700-27.500z" fill="url(#rkB)" />
    <path d="M21.300 38h3v9h-3z" fill="#37393b" />
    <PythonGlyph id="rkPy" x={12.5} y={12.5} size={20.5} />
  </svg>
);

const Trash = () => (
  <svg className="tile" viewBox="0 0 46 46">
    <defs><Grad id="trB" h a="#54585b" c="#8d9193" b="#4b4e51" /></defs>
    <path d="M3.500 2 8 43q.5 4.500 5 5h20q4.500-.5 5-5L42.500 2z" fill="url(#trB)" fillOpacity=".9" />
    <path d="M12 8q10 5 22 1l-2 33q-8 4-18 0z" fill="#c0c4c6" fillOpacity=".14" />
    <ellipse cx="23" cy="2.500" rx="19.500" ry="4" fill="#5b5f61" stroke="#989c9e" strokeWidth="1" />
    <path d="M7 2 12-3l5 2 5-3 4 3 5-2 5 3 4 2-3 3-6 2-5-1-5 3-6-2-6 1z" fill="#e4e4e2" />
    <path d="m16-1 4 4M29-1l3 5M11 4l4-2" stroke="#4f443e" strokeWidth="1.600" />
    <path d="m18 4 3-3" stroke="#46b86a" strokeWidth="2" /><path d="m26 3 3 0" stroke="#c8503a" strokeWidth="2" />
  </svg>
);

const Ps = () => <Adobe id="ps" bg="#071c32" fg="#4da2f6">Ps</Adobe>;
const Ai = () => <Adobe id="ai" bg="#2d0401" fg="#f39b32">Ai</Adobe>;
const Lr = () => <Adobe id="lr" bg="#071c32" fg="#4da2f6">Lr</Adobe>;

const APPS = [
  [Finder, 1], [Mail], [Safari, 1], [Zoom], [Trello], [Slack], [Word], [Photos], [Excel], [Messages], [FaceTime],
  [Numbers], [FindMy], [Siri], [Launchpad], [Chrome, 1], [Maps], [Stickies, 1], [Pages], [Contacts], [Analytics],
  [Freeform], [CreativeCloud], [Ps], [Ai], [Lr], [PixelPad], [VSCode, 1], [Teams], [Calendar], [Reminders], [Notes],
  [Settings, 1], [PhotoBooth], [Columns], [Terminal, 1], [VMware], [Dictionary], [Preview, 1], [Idle], [QuickTime],
];
const RECENT = [[Passwords], [Xcode], [MySQL], [Rocket, 1]];

const DockItem = ({ app: [Icon, running] }) => (
  <Slot>
    <Icon />
    {running && <RunningDot />}
  </Slot>
);

/* ---------- status icons ---------- */

const StatusIcons = () => (
  <StatusArea>
    <Status $w={30}>
      <svg width="30" height="30" fill="#f4ecee">
        <rect width="8" height="30" rx="3" /><rect x="22" width="8" height="30" rx="3" />
        <rect x="11" width="8" height="14" rx="3" /><rect x="11" y="16" width="8" height="14" rx="3" />
      </svg>
    </Status>
    <Status $w={20} $gap={38}>
      <svg width="20" height="30" fill="none" stroke="#f4ecee" strokeWidth="2.300" strokeLinejoin="round" strokeLinecap="round">
        <path d="M2 7.500 17 21.500 9.500 28.500V1.500L17 8.500 2 22.500" />
      </svg>
    </Status>
    <StatusText $w={124} $gap={37} $track={-0.55} $lh={49}>Mrs Touré</StatusText>
    <Status $w={30} $gap={34}>
      <svg width="30" height="24">
        <rect x="1.200" y="1.200" width="27.600" height="21.600" rx="2.800" fill="none" stroke="#f4ecee" strokeWidth="2.400" />
        <path d="M1 2h28v5H1z" fill="#f4ecee" />
        <path d="M4 3.600h2M7.500 3.600h2M11 3.600h2" stroke="#a05a6c" strokeWidth="1.800" />
        <path d="M5 11h9M5 14.300h9M5 17.600h9" stroke="#f4ecee" strokeWidth="1.600" />
        <path d="M20 12.500h4v4h-4zM20 12.500h-1a1.200 1.200 0 1 1 1-1zM24 12.500v-1a1.200 1.200 0 1 1 1 1zM24 16.500h1a1.200 1.200 0 1 1-1 1zM20 16.500v1a1.200 1.200 0 1 1-1-1z" fill="none" stroke="#f4ecee" strokeWidth="1.200" />
      </svg>
    </Status>
    <StatusText $w={57} $gap={36} $size={22} $lh={48}>34 %</StatusText>
    <Status $w={52} $gap={8}>
      <svg width="52" height="24">
        <rect x="1" y="1" width="44" height="22" rx="6" fill="none" stroke="#f4ecee" strokeOpacity=".5" strokeWidth="2" />
        <rect x="4" y="4" width="12" height="16" rx="3" fill="#f4ecee" />
        <path d="M48 8q3 1.500 3 4t-3 4z" fill="#f4ecee" fillOpacity=".55" />
      </svg>
    </Status>
    <Status $w={34} $gap={37}>
      <svg width="34" height="25">
        <path d="M2 9.800Q17-3.800 32 9.800M7.800 15.800Q17 7.500 26.200 15.800" fill="none" stroke="#f4ecee" strokeWidth="4.600" />
        <path d="M17 25 11.800 20Q17 15.500 22.200 20z" fill="#f4ecee" />
      </svg>
    </Status>
    <Status $w={27} $gap={42}>
      <svg width="27" height="27">
        <rect x="1" y="1" width="25" height="11" rx="5.500" fill="none" stroke="#f4ecee" strokeWidth="2" />
        <circle cx="6.800" cy="6.500" r="3.200" fill="#f4ecee" />
        <rect y="15" width="27" height="12" rx="6" fill="#f4ecee" />
        <circle cx="21" cy="21" r="3.600" fill="#9c5266" />
      </svg>
    </Status>
    <Status $w={27} $gap={37}>
      <svg width="27" height="27">
        <SiriOrb id="ms" />
        <circle cx="13.500" cy="13.500" r="13.500" fill="#4d4660" />
        <circle cx="13.500" cy="13.500" r="13.500" fill="url(#msR)" opacity=".85" />
        <circle cx="13.500" cy="13.500" r="13.500" fill="url(#msG)" opacity=".8" />
        <circle cx="13.500" cy="13.500" r="13.500" fill="url(#msB)" opacity=".75" />
        <circle cx="13.500" cy="13.500" r="13.500" fill="url(#msW)" />
      </svg>
    </Status>
    <StatusText $w={148} $gap={32}>Wed 19 Mar</StatusText>
    <StatusText $w={90} $gap={15} $track={1}>12:52</StatusText>
  </StatusArea>
);

/* ---------- data ---------- */

const HEADERS = ["ID", "Name", "Description", "Price", "Quantity", "Category"];
const STOCK = [
  ["5", "T-Shirt", "cotton", "15", "10", "Food"],
  ["6", "Phone", "Iphone 15", "869", "5", "Electronics"],
  ["7", "Strawberry", "500g tub", "10", "30", "Food"],
];
const BUTTONS = [["Add", 106, 0], ["Edit", 104, 0.2], ["Delete", 136, 0.25], ["Export CSV", 196, -0.3], ["Show Stock", 200, -0.2]];

export default function App() {
  return (
    <Desktop>
      <GlobalStyle />
      <Wallpaper />
      <CornerTint />
      <CornerTint $right />
      <BackWindow $left={1090} $right={-20} $bottom={12} $line="#4b4648" $bg="#0b090a" />
      <BackWindow $left={1} $right={2} $bottom={91} $line="#252324" />
      <BackWindow $left={3} $right={2} $bottom={91} $line="#0a0a0a" />
      <TealEdge />
      <MenuBar>
        <AppleMark />
        <MenuItem $w={132} $bold $track={0.2}>Python</MenuItem>
        <MenuItem $w={84} $track={-0.35}>File</MenuItem>
        <MenuItem $w={88}>Edit</MenuItem>
        <MenuItem $w={137} $track={-0.9}>Window</MenuItem>
        <MenuItem $w={80}>Help</MenuItem>
        <StatusIcons />
      </MenuBar>
      <AppWindow>
        <TitleBar>
          <Lights>
            <Light $color="#ed6a5f" />
            <Light $color="#f5bf4f" />
            <Light $color="#61c455" />
          </Lights>
          <Title>Stock Management</Title>
        </TitleBar>
        <SearchRow onSubmit={(e) => e.preventDefault()}>
          <SearchLabel htmlFor="q">Search:</SearchLabel>
          <SearchInput id="q" />
          <PushButton type="submit" $w={142} $drop={6} $flat $track={-0.2}>Search</PushButton>
        </SearchRow>
        <Table>
          <HeaderRow>
            {HEADERS.map((h) => <HeaderCell key={h}>{h}</HeaderCell>)}
          </HeaderRow>
          <Rows>
            {STOCK.map((r) => (
              <Row key={r[0]}>
                {r.map((v, i) => <Cell key={i}>{v}</Cell>)}
              </Row>
            ))}
          </Rows>
        </Table>
        <Actions>
          {BUTTONS.map(([t, w, track]) => <PushButton key={t} $w={w} $track={track}>{t}</PushButton>)}
        </Actions>
      </AppWindow>
      <DockShelf>
        {APPS.map((a, i) => <DockItem key={i} app={a} />)}
        <Divider $before={15} $after={10.5} />
        {RECENT.map((a, i) => <DockItem key={i} app={a} />)}
        <Divider $before={14} $after={12} />
        <DockItem app={[Trash]} />
      </DockShelf>
    </Desktop>
  );
}
